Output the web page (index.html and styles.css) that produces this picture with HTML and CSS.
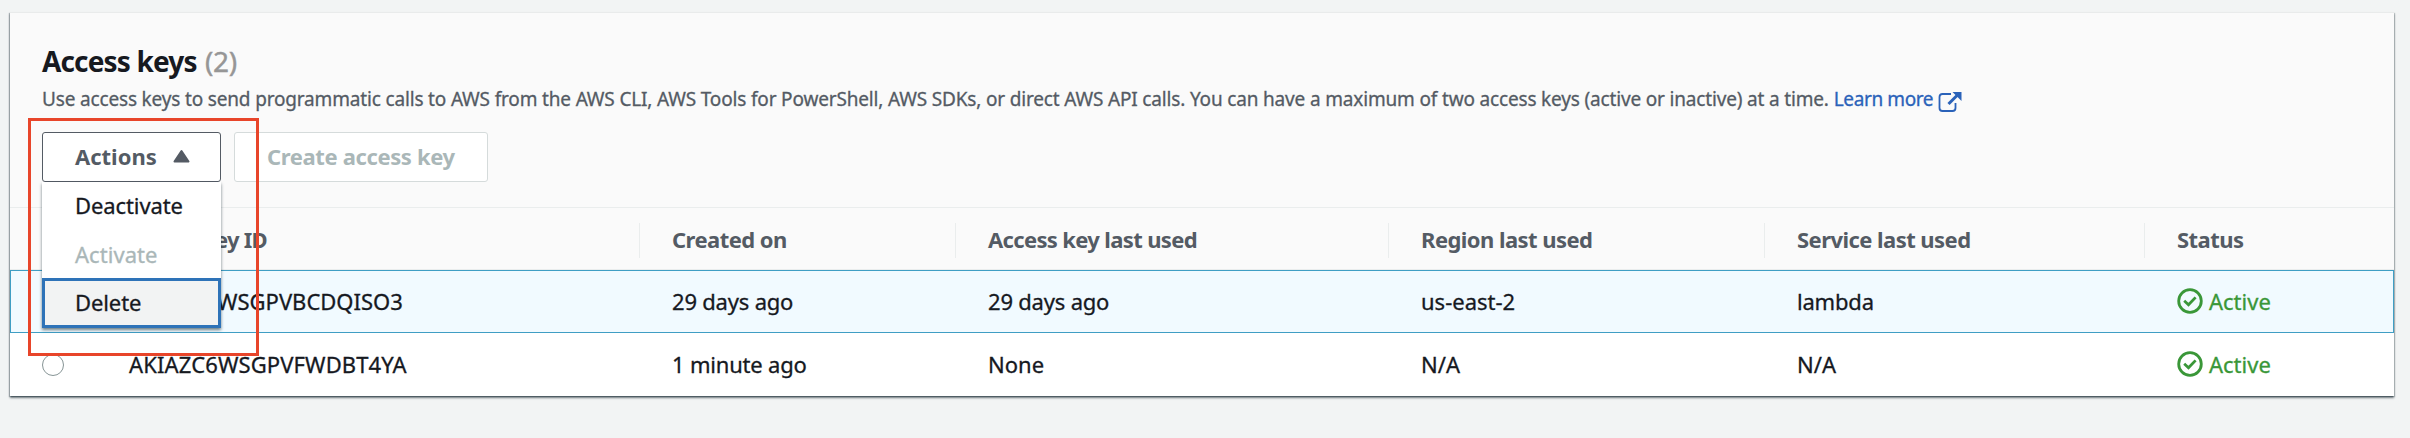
FILE: index.html
```html
<!DOCTYPE html>
<html lang="en">
<head>
<meta charset="utf-8">
<title>Access keys</title>
<link rel="stylesheet" href="styles.css">
</head>
<body>
<main class="panel">
  <header class="panel-header">
    <h2 class="title"><span class="t-title">Access keys</span> <span class="count">(2)</span></h2>
    <p class="description"><span class="t-desc">Use access keys to send programmatic calls to AWS from the AWS CLI, AWS Tools for PowerShell, AWS SDKs, or direct AWS API calls. You can have a maximum of two access keys (active or inactive) at a time.</span>
      <a class="learn" href="#"><span class="t-learn">Learn more</span><svg class="external" viewBox="0 0 24 24"><path d="M13 3H4.500Q1.500 3 1.500 6V17Q1.500 20 4.500 20H14.500Q17.500 20 17.500 17V12"/><path class="shaft" d="M10.500 13L19.500 4"/><path class="head" d="M14.500 1H23.500V10Z"/></svg></a></p>
    <div class="toolbar">
      <div class="dropdown">
        <button class="button actions"><span class="t-actions">Actions</span><svg class="caret" viewBox="0 0 17 14"><path d="M8.500 2L15.500 12.500H1.500Z"/></svg></button>
        <ul class="menu">
          <li class="item"><span class="t-deactivate">Deactivate</span></li>
          <li class="item disabled"><span class="t-activate">Activate</span></li>
          <li class="item focused"><span class="t-delete">Delete</span></li>
        </ul>
        <div class="highlight"></div>
      </div>
      <button class="button create" disabled><span class="t-create">Create access key</span></button>
    </div>
  </header>
  <section class="table">
    <div class="row head-row">
      <div class="cell"></div>
      <div class="cell key"><span class="t-keyid">Access key ID</span></div>
      <div class="cell"><span>Created on</span></div>
      <div class="cell"><span class="t-lastused">Access key last used</span></div>
      <div class="cell"><span>Region last used</span></div>
      <div class="cell"><span>Service last used</span></div>
      <div class="cell"><span>Status</span></div>
    </div>
    <div class="row selected">
      <div class="cell"><span class="radio"></span></div>
      <div class="cell key"><span>AKIAZC6WSGPVBCDQISO3</span></div>
      <div class="cell"><span class="t-days">29 days ago</span></div>
      <div class="cell"><span class="t-days">29 days ago</span></div>
      <div class="cell"><span>us-east-2</span></div>
      <div class="cell"><span class="t-days">lambda</span></div>
      <div class="cell status"><svg class="check" viewBox="0 0 26 26"><circle cx="13" cy="13" r="11.300"/><path d="M7.200 12.800L11.500 16.800L18.600 9.400"/></svg><span>Active</span></div>
    </div>
    <div class="row">
      <div class="cell"><span class="radio"></span></div>
      <div class="cell key"><span class="t-key2">AKIAZC6WSGPVFWDBT4YA</span></div>
      <div class="cell"><span class="t-days">1 minute ago</span></div>
      <div class="cell"><span>None</span></div>
      <div class="cell"><span>N/A</span></div>
      <div class="cell"><span>N/A</span></div>
      <div class="cell status"><svg class="check" viewBox="0 0 26 26"><circle cx="13" cy="13" r="11.300"/><path d="M7.200 12.800L11.500 16.800L18.600 9.400"/></svg><span>Active</span></div>
    </div>
  </section>
</main>
</body>
</html>
```

FILE: styles.css
```css
* { box-sizing: border-box; }
body {
  margin: 0;
  height: 438px;
  padding: 12px 16px 0 10px;
  background: #f2f4f4;
  color: #16191f;
  font: 22px/32px "Noto Sans", "Open Sans", sans-serif;
  overflow: hidden;
  white-space: nowrap;
}
.panel {
  height: 384px;
  background: #fff;
  border-top: 1px solid #e9ebeb;
  box-shadow: 0 2px 2px rgba(0, 20, 30, .5), 1px 1px 1px rgba(0, 20, 30, .18), -1px 1px 1px rgba(0, 20, 30, .25);
}
.panel-header {
  height: 195px;
  padding: 28px 32px 0;
  background: #fafafa;
  border-bottom: 1px solid #eaeded;
}
.title { margin: 0; font-size: 28px; line-height: 40px; font-weight: 700; letter-spacing: -.85px; }
.count { margin-left: 2px; color: #969696; font-weight: 400; letter-spacing: -.4px; -webkit-text-stroke: .4px; }
.description { display: flex; align-items: center; gap: 5px; margin: 2px 0 0; height: 32px; font-size: 19px; color: #545b64; letter-spacing: -.165px; -webkit-text-stroke: .3px; }
.learn { display: flex; align-items: center; gap: 5px; color: #2a62b9; text-decoration: none; letter-spacing: -.4px; }
.external { width: 24px; height: 24px; margin-top: 8px; fill: none; stroke: currentColor; stroke-width: 1.8; }
.external .shaft { stroke-width: 3; }
.external .head { fill: currentColor; stroke: none; }
.toolbar { display: flex; gap: 13px; margin-top: 17px; }
.dropdown { position: relative; }
.button {
  display: flex; align-items: center; height: 50px; padding: 0 32px 2px;
  background: #fff; border: 1px solid #545b64; border-radius: 3px;
  color: #545b64; font: 700 22px/32px "Noto Sans", "Open Sans", sans-serif;
}
.actions { width: 179px; gap: 16px; }
.create { width: 254px; border-color: #d5dbdb; color: #aab7b8; letter-spacing: -.37px; }
.caret { flex: none; width: 17px; height: 14px; fill: currentColor; stroke: currentColor; stroke-width: 2; stroke-linejoin: round; }
.menu {
  position: absolute; z-index: 2; left: 0; top: 50px; width: 179px; margin: 0; padding: 0;
  list-style: none; background: #fff; box-shadow: 0 2px 3px rgba(0, 28, 36, .55);
}
.item { display: flex; align-items: center; height: 48px; padding: 0 32px 2px 33px; letter-spacing: -.1px; -webkit-text-stroke: .3px; }
.item.disabled { color: #aab7b8; padding-bottom: 0; letter-spacing: .05px; }
.item.focused { height: 50px; padding: 0 29px 2px 30px; border: 3px solid #2e73b8; background: #f2f3f3; }
.highlight { position: absolute; z-index: 3; left: -14px; top: -14px; width: 231px; height: 238px; border: 3px solid #e8452a; }
.row { display: grid; grid-template-columns: 85px 544px 316px 433px 376px 380px 1fr; height: 63px; -webkit-text-stroke: .3px; }
.cell { display: flex; align-items: center; padding: 0 0 2px 33px; }
.cell:first-child { padding: 0 0 0 32px; }
.cell.key { padding-left: 34px; }
.head-row { height: 62px; background: #fafafa; border-bottom: 1px solid #eaeded; color: #545b64; font-weight: 700; letter-spacing: -.55px; -webkit-text-stroke: 0; }
.head-row .cell { padding-bottom: 3px; }
.head-row .cell + .cell + .cell { border-left: 1px solid #eaeded; margin: 15px 0; padding-left: 32px; }
.t-keyid { letter-spacing: -.8px; }
.t-lastused { letter-spacing: -.65px; }
.t-days { letter-spacing: -.2px; }
.t-key2 { letter-spacing: .12px; }
.selected { background: #f1faff; outline: 1px solid #3f9ec4; outline-offset: -1px; }
.radio { width: 22px; height: 22px; border: 1px solid #879596; border-radius: 50%; background: #fff; }
.status { gap: 6px; color: #3a9738; }
.check { width: 26px; height: 26px; fill: none; stroke: currentColor; stroke-width: 2.8; }
```
